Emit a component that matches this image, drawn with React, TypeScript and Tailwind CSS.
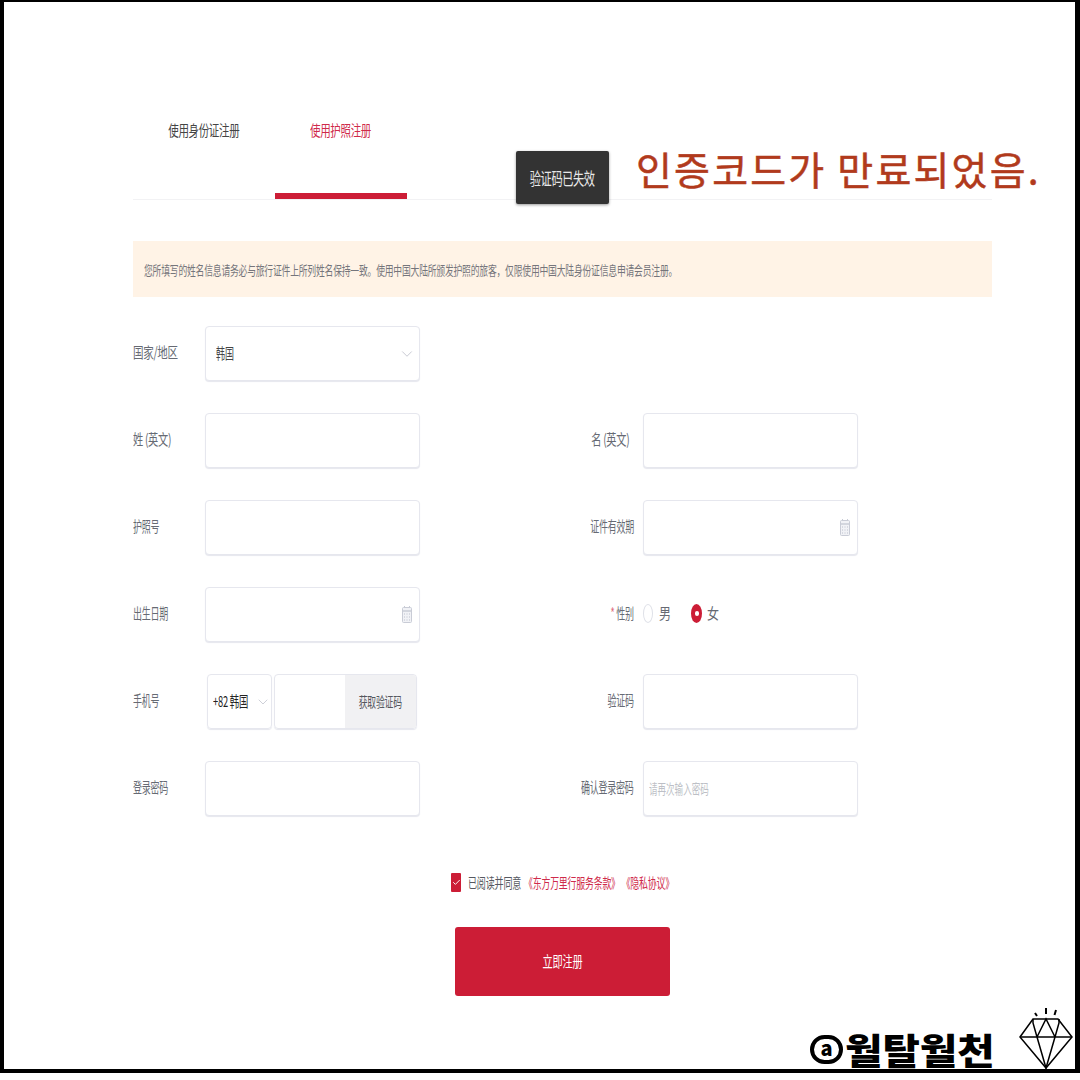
import type { ReactNode } from 'react';
import { Check, ChevronDown } from 'lucide-react';

const CJK = "font-['Noto_Sans_CJK_SC','Noto_Sans_CJK_KR',sans-serif]";

// the reference has its text squeezed horizontally
function Squeeze({ children, className = 'scale-x-[0.6] origin-left' }: { children: ReactNode; className?: string }) {
    return <span className={`inline-block whitespace-nowrap ${className}`}>{children}</span>;
}

function CalendarIcon() {
    return (
        <svg width="10" height="17" viewBox="0 0 10 17" fill="none">
            <rect x="0.5" y="1.5" width="9" height="15" rx="1" fill="#f1f2f6" stroke="#c9ccd6" />
            <path d="M1 5h8" stroke="#c9ccd6" strokeWidth="1.5" />
            <path d="M2.5 0v2M7.5 0v2" stroke="#c9ccd6" />
            <path d="M2 8h1M4.500 8h1M7 8h1M2 11h1M4.500 11h1M7 11h1M2 14h1M4.500 14h1M7 14h1" stroke="#bcc0cc" />
        </svg>
    );
}

function Input({ placeholder, icon, chevron, value }: { placeholder?: string; icon?: boolean; chevron?: boolean; value?: string }) {
    return (
        <div className={`w-[215px] h-[55px] shrink-0 border border-[#e6e7ee] shadow-[0_1px_1px_#e6e7ee] rounded-[4px] bg-white flex items-center justify-between pr-[3px] ${placeholder ? 'pl-[5px]' : 'pl-[10px]'}`}>
            {placeholder ? (
                <span className="text-[14px] text-[#bdbfc6]"><Squeeze className="scale-x-[0.61] origin-left">{placeholder}</Squeeze></span>
            ) : (
                <span className="text-[15px] text-[#444]"><Squeeze className="scale-x-[0.6] origin-left">{value}</Squeeze></span>
            )}
            {icon && <span className="pr-[4px] flex"><CalendarIcon /></span>}
            {chevron && <ChevronDown size={18} strokeWidth={1} className="text-[#b5b8c4]" />}
        </div>
    );
}

function Label({ children, right, scale }: { children: ReactNode; right?: boolean; scale?: string }) {
    const squeeze = scale || (right ? 'scale-x-[0.6] origin-right' : 'scale-x-[0.6] origin-left');
    return (
        <div className={`w-[72px] shrink-0 text-[15px] leading-[20px] pb-[4px] text-[#666a73] tracking-[-0.4px] flex ${right ? 'justify-end pr-[9px]' : ''}`}>
            <Squeeze className={squeeze}>{children}</Squeeze>
        </div>
    );
}

function Row({ left, right }: { left: ReactNode; right?: ReactNode }) {
    return (
        <div className="flex h-[55px] items-center">
            <div className="w-[438px] shrink-0 flex items-center">{left}</div>
            {right && <div className="flex items-center">{right}</div>}
        </div>
    );
}

export default function App() {
    return (
        <div className={`w-[1080px] h-[1073px] bg-white relative border-t-2 border-l-4 border-r-[5px] border-b-4 border-black ${CJK}`}>
            <div className="ml-[129px] w-[859px]">
                {/* Tabs */}
                <div className="h-[198px] border-b border-[#f2f2f4] flex">
                    <div className="w-[142px] pt-[117px] text-center text-[15px] leading-[22px] tracking-[-0.5px] text-[#444]">
                        <Squeeze className="scale-x-[0.7] origin-center">使用身份证注册</Squeeze>
                    </div>
                    <div className="w-[132px] h-[197px] pt-[117px] text-center text-[15px] leading-[22px] tracking-[-0.5px] text-[#cf2a4a] border-b-[6px] border-[#cc1d36]">
                        <Squeeze className="scale-x-[0.7] origin-center">使用护照注册</Squeeze>
                    </div>
                </div>

                {/* Notice */}
                <div className="mt-[41px] h-[56px] bg-[#fff3e6] flex items-center pl-[11px] pt-[2px] text-[13px] tracking-[-0.3px] text-[#75757b]">
                    <Squeeze className="scale-x-[0.677] origin-left">
                        您所填写的姓名信息请务必与旅行证件上所列姓名保持一致。使用中国大陆所颁发护照的旅客，仅限使用中国大陆身份证信息申请会员注册。
                    </Squeeze>
                </div>

                {/* Form */}
                <div className="mt-[29px] flex flex-col gap-8">
                    <Row left={<><Label scale="scale-x-[0.7] origin-left">国家/地区</Label><Input value="韩国" chevron /></>} />
                    <Row
                        left={<><Label scale="scale-x-[0.68] origin-left">姓 (英文)</Label><Input /></>}
                        right={<><Label right scale="scale-x-[0.68] origin-right"><span className="pr-[7px]">名 (英文)</span></Label><Input /></>}
                    />
                    <Row
                        left={<><Label>护照号</Label><Input /></>}
                        right={<><Label right>证件有效期</Label><Input icon /></>}
                    />
                    <Row
                        left={<><Label>出生日期</Label><Input icon /></>}
                        right={
                            <>
                                <Label right><span className="text-[#e0707f]">* </span>性别</Label>
                                <div className="flex items-center pb-[2px] text-[15px] text-[#666a73]">
                                    <span className="w-[10px] h-[19px] rounded-[50%] border border-[#dfe1e8] bg-white" />
                                    <span className="ml-[6px] w-[13px]"><Squeeze className="scale-x-[0.8] origin-left">男</Squeeze></span>
                                    <span className="ml-[19px] w-[11px] h-[19px] rounded-[50%] bg-[#cc1d36] flex items-center justify-center">
                                        <span className="w-[4px] h-[5px] rounded-full bg-white" />
                                    </span>
                                    <span className="ml-[5px] w-[13px]"><Squeeze className="scale-x-[0.8] origin-left">女</Squeeze></span>
                                </div>
                            </>
                        }
                    />
                    <Row
                        left={
                            <>
                                <Label>手机号</Label>
                                <div className="ml-[2px] flex gap-[2px]">
                                    <div className="w-[65px] h-[55px] border border-[#e6e7ee] shadow-[0_1px_1px_#e6e7ee] rounded-[4px] flex items-center pl-[5px] text-[15px] tracking-[-0.3px] text-[#222]">
                                        <span className="w-[42px] shrink-0"><Squeeze className="scale-x-[0.62] origin-left">+82 韩国</Squeeze></span>
                                        <ChevronDown size={16} strokeWidth={1} className="text-[#b5b8c4] shrink-0" />
                                    </div>
                                    <div className="w-[143px] h-[55px] border border-[#e6e7ee] shadow-[0_1px_1px_#e6e7ee] rounded-[4px] flex overflow-hidden">
                                        <div className="w-[70px]" />
                                        <div className="flex-1 bg-[#f1f1f3] flex items-center justify-center text-[14px] tracking-[-0.3px] text-[#55575e]">
                                            <Squeeze className="scale-x-[0.63] origin-center">获取验证码</Squeeze>
                                        </div>
                                    </div>
                                </div>
                            </>
                        }
                        right={<><Label right>验证码</Label><Input /></>}
                    />
                    <Row
                        left={<><Label>登录密码</Label><Input /></>}
                        right={<><Label right>确认登录密码</Label><Input placeholder="请再次输入密码" /></>}
                    />
                </div>

                {/* Agreement */}
                <div className="mt-[56px] ml-[318px] flex items-center h-[20px] text-[13.5px] tracking-[-0.3px]">
                    <span className="w-[10px] h-[19px] bg-[#cc1d36] flex items-center justify-center rounded-[1px]">
                        <Check size={9} strokeWidth={2.5} className="text-white" />
                    </span>
                    <span className="ml-[7px] w-[56px] text-[#555860]"><Squeeze className="scale-x-[0.67] origin-left">已阅读并同意</Squeeze></span>
                    <span className="text-[#cf2a4a]"><Squeeze className="scale-x-[0.66] origin-left">《东方万里行服务条款》 《隐私协议》</Squeeze></span>
                </div>

                <button className="block mt-[35px] ml-[322px] w-[215px] h-[69px] bg-[#cc1d36] rounded-[3px] text-white text-[15px] tracking-[-0.3px]">
                    <Squeeze className="scale-x-[0.68] origin-center">立即注册</Squeeze>
                </button>
            </div>

            {/* Toast over the tabs */}
            <div className="absolute left-[512px] top-[149px] w-[93px] h-[53px] bg-[#333333] rounded-[2px] shadow-[0_1px_3px_rgba(0,0,0,0.4)] flex items-center justify-center text-[#e8e8e8] text-[17px] tracking-[-0.6px]">
                <Squeeze className="scale-x-[0.66] origin-center">验证码已失效</Squeeze>
            </div>

            {/* Annotation */}
            <div className="absolute left-[632px] top-[138px] text-[39px] leading-[56px] tracking-[2.2px] [-webkit-text-stroke:0.5px_#b13a1c] whitespace-nowrap text-[#b13a1c] font-['Noto_Sans_CJK_KR',sans-serif]">
                인증코드가 만료되었음.
            </div>

            {/* Watermark */}
            <div className="absolute left-[806px] top-[1027px] h-[40px] flex items-center gap-[2px] text-black font-['Noto_Sans_CJK_KR',sans-serif]">
                <span className="w-[33px] h-[29px] rounded-full border-[4px] border-black flex items-center justify-center text-[20px] leading-none font-black pb-[3px]">a</span>
                <span className="text-[36px] leading-[40px] font-black">
                    <Squeeze className="scale-x-[1.13] origin-left">월탈월천</Squeeze>
                </span>
            </div>
            <svg className="absolute left-[1011px] top-[1003px]" width="60" height="66" viewBox="0 0 60 66" fill="none" stroke="#000" strokeWidth="1.5">
                <path d="M5 32 18 14h25l14 18-26 31z" />
                <path d="M5 32h52M18 14v4l4 14 9 31 9-31 4-14v-4M22 32l9-18 9 18" />
                <path d="M20 8l2 3M31 3v6M41 5l-1.500 5" strokeWidth="2" />
            </svg>
        </div>
    );
}
